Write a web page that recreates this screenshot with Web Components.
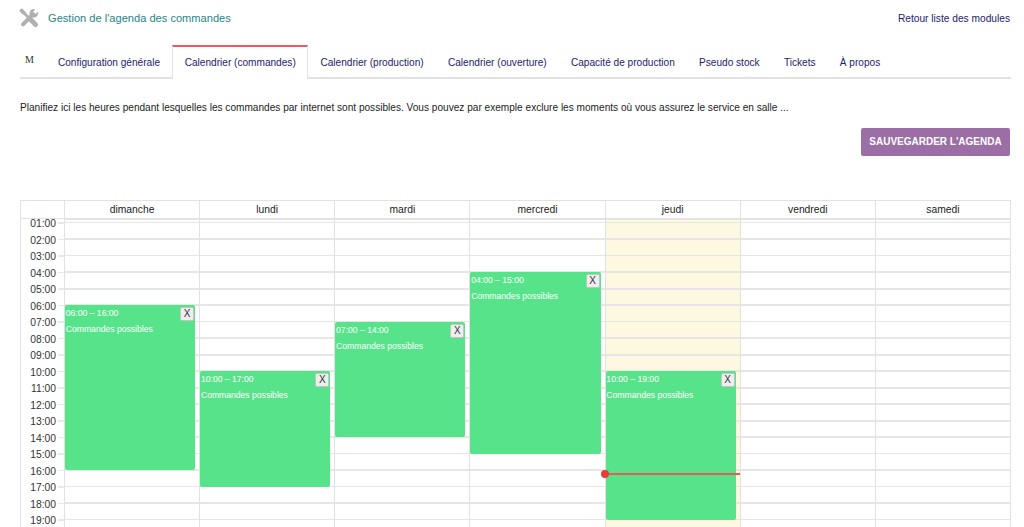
<!DOCTYPE html>
<html lang="fr">
<head>
<meta charset="utf-8">
<title>Gestion de l'agenda des commandes</title>
<style>
  html, body { margin: 0; height: 527px; overflow: hidden; background: #fff; }
  body { font-family: "Liberation Sans", Arial, sans-serif; font-size: 10.1px; }
</style>
</head>
<body>
<agenda-page>
  <module-header title-text="Gestion de l'agenda des commandes" link-text="Retour liste des modules"></module-header>
  <tab-bar>
    <tab-item narrow>M</tab-item>
    <tab-item>Configuration générale</tab-item>
    <tab-item active>Calendrier (commandes)</tab-item>
    <tab-item>Calendrier (production)</tab-item>
    <tab-item>Calendrier (ouverture)</tab-item>
    <tab-item>Capacité de production</tab-item>
    <tab-item>Pseudo stock</tab-item>
    <tab-item>Tickets</tab-item>
    <tab-item>À propos</tab-item>
  </tab-bar>
  <intro-text>Planifiez ici les heures pendant lesquelles les commandes par internet sont possibles. Vous pouvez par exemple exclure les moments où vous assurez le service en salle ...</intro-text>
  <save-bar>SAUVEGARDER L'AGENDA</save-bar>
  <week-calendar>
    <cal-event day="0" start="6" end="16" title="Commandes possibles"></cal-event>
    <cal-event day="1" start="10" end="17" title="Commandes possibles"></cal-event>
    <cal-event day="2" start="7" end="14" title="Commandes possibles"></cal-event>
    <cal-event day="3" start="4" end="15" title="Commandes possibles"></cal-event>
    <cal-event day="4" start="10" end="19" title="Commandes possibles"></cal-event>
  </week-calendar>
</agenda-page>

<script>
const pad = n => String(n).padStart(2, '0');

class AgendaPage extends HTMLElement {
  constructor() {
    super();
    this.attachShadow({ mode: 'open' });
    this.shadowRoot.innerHTML = `
      <style>
        :host { display: block; padding: 0 13px 0 20px; }
      </style>
      <slot></slot>
    `;
  }
}

class ModuleHeader extends HTMLElement {
  constructor() {
    super();
    this.attachShadow({ mode: 'open' });
  }

  connectedCallback() {
    this.shadowRoot.innerHTML = `
      <style>
        :host { display: flex; align-items: center; height: 45px; padding-bottom: 9px; box-sizing: border-box; }
        svg { width: 20px; height: 20px; margin: 0 9px 0 -1px; flex: none; }
        .title { color: #1f8585; font-size: 11.1px; flex: 1; }
        a { color: #1c1c6e; font-size: 10.2px; text-decoration: none; margin-right: 1px; }
      </style>
      <svg viewBox="0 0 20 20" aria-hidden="true" fill="none" stroke="#b0b0b0" stroke-linecap="round">
        <path d="M3 3 10 10" stroke-width="2.6"/>
        <path d="M2.600 2.600 4.800 4.800" stroke-width="3.800"/>
        <path d="M11.500 11.500 16.600 16.600" stroke-width="4.800"/>
        <path d="M4 16.300 12.800 7.500" stroke-width="4"/>
        <circle cx="14.800" cy="5.200" r="4.300" fill="#b0b0b0" stroke="none"/>
        <path d="M15.300 4.700 20 0" stroke="#fff" stroke-width="3.400" stroke-linecap="butt"/>
      </svg>
      <span class="title">${this.getAttribute('title-text')}</span>
      <a href="#">${this.getAttribute('link-text')}</a>
    `;
  }
}

class TabBar extends HTMLElement {
  constructor() {
    super();
    this.attachShadow({ mode: 'open' });
    this.shadowRoot.innerHTML = `
      <style>
        :host { display: flex; height: 32px; border-bottom: 2px solid #e2e2e2; }
      </style>
      <slot></slot>
    `;
  }
}

class TabItem extends HTMLElement {
  constructor() {
    super();
    this.attachShadow({ mode: 'open' });
    this.shadowRoot.innerHTML = `
      <style>
        :host { display: flex; align-items: center; padding: 0 12.15px 1px; color: #1c1c6e; font-size: 10.1px; white-space: nowrap; box-sizing: border-box; height: 34px; border-top: 2px solid transparent; }
        :host([active]) { padding: 0 11.5px 1px; background: #fff; border: solid #e2e2e2; border-width: 2px 1px 0; border-top-color: #f05a5a; }
        :host([narrow]) { font-family: "Liberation Serif", serif; color: #333; font-size: 10px; padding: 0 11.85px 7px 5px; }
      </style>
      <slot></slot>
    `;
  }
}

class IntroText extends HTMLElement {
  constructor() {
    super();
    this.attachShadow({ mode: 'open' });
    this.shadowRoot.innerHTML = `
      <style>
        :host { display: block; color: #222; font-size: 10.1px; line-height: 14px; padding-top: 22px; }
      </style>
      <slot></slot>
    `;
  }
}

class SaveBar extends HTMLElement {
  constructor() {
    super();
    this.attachShadow({ mode: 'open' });
    this.shadowRoot.innerHTML = `
      <style>
        :host { display: flex; justify-content: flex-end; padding: 13px 1px 0 0; }
        button { width: 149px; height: 28px; padding: 0 0 1px; border: 0; border-radius: 2px; background: #9b6ea6; color: #fff; font: bold 10px "Liberation Sans", Arial, sans-serif; white-space: nowrap; }
      </style>
      <button type="button"><slot></slot></button>
    `;
  }
}

const DAYS = ['dimanche', 'lundi', 'mardi', 'mercredi', 'jeudi', 'vendredi', 'samedi'];
const HOUR = 16.5;
const FIRST_LINE = 3.5; // the first hour is scrolled away, only its tail shows

class WeekCalendar extends HTMLElement {
  constructor() {
    super();
    this.attachShadow({ mode: 'open' });
  }

  connectedCallback() {
    const head = DAYS.map(d => `<div class="day">${d}</div>`).join('');
    let hours = '';
    for (let h = 1; h < 20; h++) hours += `<div class="label"><span>${pad(h)}:00</span></div>`;
    const cols = DAYS.map((d, i) => `
      <div class="col${i === 4 ? ' today' : ''}">
        <slot name="day${i}"></slot>
        ${i === 4 ? '<div class="now"></div>' : ''}
      </div>`).join('');

    this.shadowRoot.innerHTML = `
      <style>
        :host { display: block; margin-top: 44px; height: 327px; overflow: hidden; border: solid #e2e2e2; border-width: 1px 1px 0; box-sizing: border-box; width: 991px; }
        .head, .body { display: grid; grid-template-columns: 43px repeat(7, 1fr); }
        .head { height: 17px; border-bottom: 1px solid #e2e2e2; }
        .head .day { border-left: 1px solid #e2e2e2; text-align: center; line-height: 17px; color: #222; font-size: 10.3px; }
        .body { position: relative; height: 308px; overflow: hidden; }
        .gutter { padding-top: ${FIRST_LINE}px; }
        .label { height: ${HOUR}px; position: relative; color: #333; font-size: 10.3px; }
        .label::after { content: ""; position: absolute; top: -0.5px; right: 0; width: 6px; height: 1.5px; background: #e8e8e8; }
        .label span { position: absolute; right: 8px; top: -3.5px; line-height: 9px; }
        .col { position: relative; border-left: 1px solid #e2e2e2; background-image: repeating-linear-gradient(to bottom, #e6e6e6 0, #e6e6e6 1.5px, transparent 1.5px, transparent ${HOUR}px); background-position: 0 ${FIRST_LINE - 0.5}px; }
        .today { background-color: #fdf8e0; }
        .now { position: absolute; left: 0; right: 0; top: 254px; height: 1.5px; background: #d9635a; }
        .now::before { content: ""; position: absolute; left: -4.5px; top: -3.25px; width: 8px; height: 8px; border-radius: 50%; background: #ea3a3a; }
      </style>
      <div class="head"><div></div>${head}</div>
      <div class="body">
        <div class="gutter">${hours}</div>
        ${cols}
      </div>
    `;

    this.querySelectorAll('cal-event').forEach(ev => {
      ev.slot = 'day' + ev.getAttribute('day');
    });
  }
}

class CalEvent extends HTMLElement {
  constructor() {
    super();
    this.attachShadow({ mode: 'open' });
  }

  connectedCallback() {
    const start = +this.getAttribute('start');
    const end = +this.getAttribute('end');
    this.style.top = (FIRST_LINE + (start - 1) * HOUR) + 'px';
    this.style.height = ((end - start) * HOUR) + 'px';
    this.shadowRoot.innerHTML = `
      <style>
        :host { display: block; position: absolute; left: 0; right: 4px; background: #57e389; border-radius: 2px; color: #fff; font-size: 8.6px; }
        .time { padding: 3px 0.8px 0; line-height: 10px; }
        .name { padding: 6px 0.8px 0; line-height: 10px; }
        button { position: absolute; top: 2px; right: 1px; width: 14px; height: 14px; padding: 0; border: 1px solid #c4c4c4; border-radius: 2px; background: #eee; color: #333; font: 10px/12px "Liberation Sans", Arial, sans-serif; }
      </style>
      <div class="time">${pad(start)}:00 – ${pad(end)}:00</div>
      <div class="name">${this.getAttribute('title')}</div>
      <button type="button">X</button>
    `;
  }
}

customElements.define('agenda-page', AgendaPage);
customElements.define('module-header', ModuleHeader);
customElements.define('tab-bar', TabBar);
customElements.define('tab-item', TabItem);
customElements.define('intro-text', IntroText);
customElements.define('save-bar', SaveBar);
customElements.define('cal-event', CalEvent);
customElements.define('week-calendar', WeekCalendar);
</script>
</body>
</html>
